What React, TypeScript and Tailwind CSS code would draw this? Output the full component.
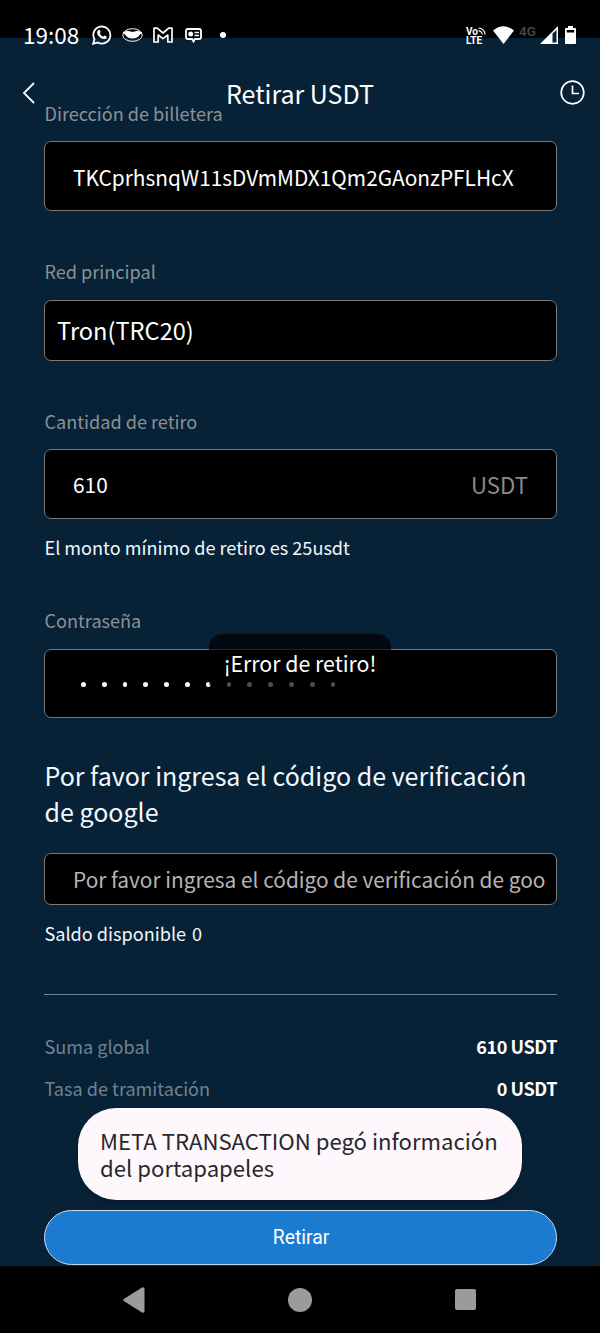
import React from "react";

function StatusBar() {
  return (
    <div className="flex h-[60px] shrink-0 items-start justify-between bg-[linear-gradient(#000_38px,#072136_38px)] pl-[23px] pr-[24px] pt-[22px] text-white">
      <div className="flex h-[26px] items-center">
        <span className="w-[69px] whitespace-nowrap pb-[2px] text-[22.5px] leading-[24px]">
          19:08
        </span>
        <svg width="20" height="20" viewBox="0 0 20 20" fill="none">
          <path
            d="M1.2 18.8 2.5 14.3A8.5 8.5 0 1 1 5.8 17.5Z"
            stroke="white"
            strokeWidth="1.8"
          />
          <path
            d="M6.2 5.2c.8-.8 1.5-.5 1.8.4l.6 1.5-.8 1.3c.8 1.5 1.9 2.5 3.5 3.2l1.2-1.2 2.2 1.1c.3 2-1.3 2.8-3 2.5-3.6-.7-6.5-3.8-6.6-6.6 0-1 .4-1.6 1.1-2.2Z"
            fill="white"
          />
        </svg>
        <svg
          className="ml-[10px]"
          width="21"
          height="14"
          viewBox="0 0 21 14"
          fill="none"
        >
          <ellipse cx="10.5" cy="7" rx="9.7" ry="6.3" stroke="white" />
          <path
            d="M.6 4.500C3 3.200 4.500 2.600 6.500 3c1.600.3 2.500.8 4 .8s2.400-.5 4-.8c2-.4 3.500.2 5.900 1.500-1.400.9-2.400 2-3.400 3.300-2.500 3.500-10.500 3.500-13 0C3 6.500 2 5.400.6 4.500Z"
            fill="white"
          />
        </svg>
        <svg
          className="ml-[10px]"
          width="20"
          height="16"
          viewBox="0 0 20 16"
          fill="none"
          stroke="white"
          strokeWidth="1.7"
          strokeLinejoin="round"
        >
          <path d="M1 15V1.200h3.200L10 6l5.800-4.800H19V15h-4.200V8L10 11.600 5.200 8v7Z" />
        </svg>
        <svg
          className="ml-[12px]"
          width="17"
          height="15"
          viewBox="0 0 17 15"
          fill="none"
          stroke="white"
          strokeWidth="1.8"
        >
          <path d="M3 1h11q2 0 2 2v6q0 2-2 2h-4l-1.500 2.500L7 11H3q-2 0-2-2V3q0-2 2-2Z" />
          <path d="M9.500 4.500h4.500M9.500 7.500h4.500" strokeWidth="1.6" />
          <circle cx="5.7" cy="6" r="2.5" fill="white" stroke="none" />
        </svg>
        <span className="ml-[18px] size-[6px] rounded-full bg-white" />
      </div>

      <div className="flex h-[26px] items-center">
        <div className="w-[27px] pt-[2px] font-[Roboto,sans-serif] text-[10px] font-bold leading-[9px]">
          <div className="flex">
            Vo
            <svg
              width="8"
              height="8"
              viewBox="0 0 8 8"
              fill="none"
              stroke="white"
              strokeWidth="1.2"
            >
              <path d="M.5 1A6.500 6.500 0 0 1 7 7.500M.5 3.800A3.700 3.700 0 0 1 4.200 7.500" />
            </svg>
          </div>
          <div>LTE</div>
        </div>
        <svg width="21" height="18" viewBox="0 0 21 18" fill="white">
          <path d="M0 4.500Q10.500-4 21 4.500L10.500 18Z" />
        </svg>
        <span className="ml-[5px] w-[21px] self-start pt-[2px] font-[Roboto,sans-serif] text-[13.5px] font-medium leading-[14px] text-[#4a4a4a]">
          4G
        </span>
        <svg width="18" height="18" viewBox="0 0 18 18">
          <path d="M18 0v18H0Z" fill="white" />
          <path d="M12.500 7.500 16.500 4v12.500h-4Z" fill="#072136" />
        </svg>
        <svg className="ml-[7px]" width="11" height="18" viewBox="0 0 11 18">
          <path
            d="M3 0h5v2h2.200q.8 0 .8.8v14.400q0 .8-.8.8H.8q-.8 0-.8-.8V2.800Q0 2 .8 2H3Z"
            fill="white"
          />
          <path d="M1.800 4h7.400v2.500H1.800Z" fill="black" />
        </svg>
      </div>
    </div>
  );
}

function Header() {
  return (
    <header className="flex h-[43px] shrink-0 items-start pl-[22px] pr-[15px] pt-[20px]">
      <svg
        className="mt-[2px]"
        width="28"
        height="22"
        viewBox="0 0 28 22"
        fill="none"
        stroke="white"
        strokeWidth="1.8"
      >
        <path d="M12 1 2 11l10 10" />
      </svg>
      <h1 className="-mt-[2px] flex-1 pr-[10px] text-center text-[25px] leading-[30px] text-white">
        Retirar USDT
      </h1>
      <svg
        width="25"
        height="25"
        viewBox="0 0 25 25"
        fill="none"
        stroke="white"
        strokeWidth="1.7"
      >
        <circle cx="12.5" cy="12.5" r="11.3" />
        <path d="M12.500 5.500v8h6.500" />
      </svg>
    </header>
  );
}

function Label({ children }: { children: React.ReactNode }) {
  return (
    <div className="pl-[0.5px] text-[18.1px] leading-[27px] text-[#8b9196]">
      {children}
    </div>
  );
}

const box =
  "flex items-center rounded-[7px] border border-[#777b7d] bg-black text-white";

export default function App() {
  return (
    <div className="relative flex h-[1333px] w-[600px] flex-col overflow-hidden bg-[#072136] font-['Noto_Sans_CJK_SC',sans-serif]">
      <StatusBar />
      <Header />

      <main className="flex flex-1 flex-col pl-[44px] pr-[43px]">
        <div className="-mt-[3px]">
          <Label>Dirección de billetera</Label>
        </div>
        <div
          className={`${box} mt-[14px] h-[70px] pl-[28px] pt-[3px] text-[20.85px]`}
        >
          TKCprhsnqW11sDVmMDX1Qm2GAonzPFLHcX
        </div>

        <div className="mt-[47px]">
          <Label>Red principal</Label>
        </div>
        <div className={`${box} mt-[15px] h-[61px] pl-[12px] text-[23.6px]`}>
          Tron(TRC20)
        </div>

        <div className="mt-[47px]">
          <Label>Cantidad de retiro</Label>
        </div>
        <div
          className={`${box} mt-[14px] h-[70px] justify-between px-[28px] pt-[2px] text-[20.85px]`}
        >
          <span>610</span>
          <span className="text-[22.2px] text-[#8b8b8b]">USDT</span>
        </div>
        <p className="mt-[15px] pl-[0.5px] text-[18.1px] leading-[27px] text-[#f0f7fc]">
          El monto mínimo de retiro es 25usdt
        </p>

        <div className="mt-[46px]">
          <Label>Contraseña</Label>
        </div>
        <div
          className={`${box} mt-[15px] h-[69px] gap-[16px] pl-[36px] pt-[2px]`}
        >
          {Array.from({ length: 13 }, (_, i) => (
            <span key={i} className="size-[4.8px] rounded-full bg-white" />
          ))}
        </div>

        <h2 className="mt-[39px] pl-[0.5px] text-[25px] leading-[36px] text-[#f2f9ff]">
          Por favor ingresa el código de verificación
          <br />
          de google
        </h2>
        <div className={`${box} mt-[24px] h-[52px] pl-[28px] pr-[11px] pt-px`}>
          <span className="overflow-hidden whitespace-nowrap text-[20.85px] text-[#b5b5b5]">
            Por favor ingresa el código de verificación de goo
          </span>
        </div>
        <p className="mt-[14px] pl-[0.5px] text-[18.1px] leading-[28px] text-[#f0f7fc]">
          Saldo disponible <span className="ml-[2px]">0</span>
        </p>

        <hr className="mt-[47px] border-[#6d8b9d]" />

        <dl className="mt-[37px] pl-[0.5px] text-[18.1px] leading-[28px]">
          <div className="flex justify-between">
            <dt className="text-[#6f8392]">Suma global</dt>
            <dd className="font-bold tracking-[-0.45px] text-white">
              610 USDT
            </dd>
          </div>
          <div className="mt-[14px] flex justify-between">
            <dt className="text-[#6f8392]">Tasa de tramitación</dt>
            <dd className="font-bold tracking-[-0.45px] text-white">0 USDT</dd>
          </div>
        </dl>

        <button className="mt-[108px] h-[55px] shrink-0 rounded-full border border-[#c5dcf0] bg-[#1a7bd0] pl-px font-[Roboto,sans-serif] text-[19.4px] text-white">
          Retirar
        </button>
      </main>

      <nav className="flex h-[67px] shrink-0 items-center justify-between bg-black pl-[123px] pr-[124px]">
        <svg width="22" height="26" viewBox="0 0 22 26" fill="#9b9b9b">
          <path d="M.8 12 19 .5q2.500-1 2.500 1.500v22q0 2.500-2.500 1.500L.8 14q-1.300-1 0-2Z" />
        </svg>
        <span className="size-[24px] rounded-full bg-[#9b9b9b]" />
        <span className="size-[21px] rounded-[2px] bg-[#9b9b9b]" />
      </nav>

      {/* error toast */}
      <div className="absolute left-[209px] top-[634px] h-[60px] w-[182px] rounded-[13px] bg-black/70 text-center text-[21.3px] leading-[58px] text-white">
        ¡Error de retiro!
      </div>

      {/* clipboard notice */}
      <div className="absolute left-[78px] top-[1108px] h-[92px] w-[444px] rounded-[38px] bg-[#fef8fc] pl-[22px] pt-[19px] text-[22.15px] leading-[27px] text-[#29272b] shadow-md">
        META TRANSACTION pegó información
        <br />
        del portapapeles
      </div>
    </div>
  );
}
